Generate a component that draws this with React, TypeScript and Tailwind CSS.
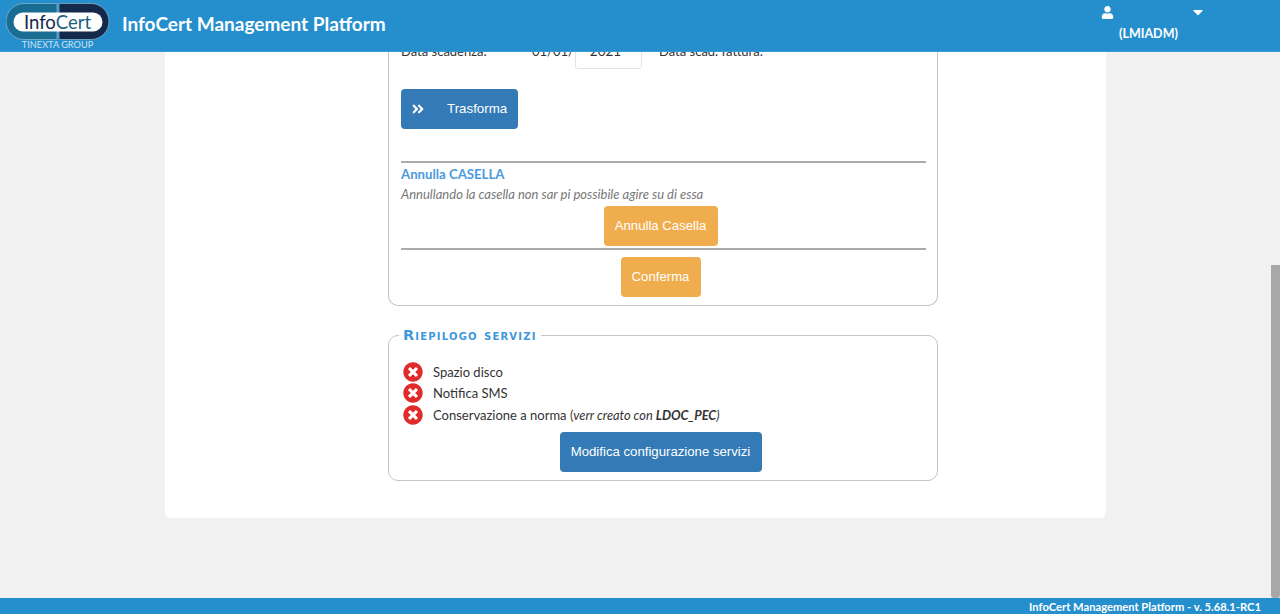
import React from "react";
import { FaAngleDoubleRight, FaUser, FaCaretDown, FaTimesCircle } from "react-icons/fa";

function Logo() {
  return (
    <div className="relative w-[104px] h-[50px] shrink-0">
      <svg width="104" height="37" viewBox="0 0 104 37" className="absolute left-0 top-[3px]">
        <path d="M51 0.500H18A18 18 0 0 0 18 36.500H51Z" fill="#1a6d92" stroke="#8fbcd6" strokeWidth="0.700" />
        <path d="M53 0.500H85A18 18 0 0 1 85 36.500H53Z" fill="#14294b" stroke="#8fbcd6" strokeWidth="0.700" />
        <rect x="7.500" y="9.500" width="89" height="19" rx="9.500" fill="#ffffff" />
      </svg>
      <div className="absolute left-0 top-[8px] w-[103px] text-center font-['Lato','sans-serif'] text-[18.500px] leading-[28px] text-[#14294b]">
        Info<span className="text-[#1d5f80]">Cert</span>
      </div>
      <div className="absolute left-0 top-[39px] w-[103px] text-center font-['Lato','sans-serif'] text-[9.200px] leading-[12px] text-[#cfe3f0]">
        TINEXTA GROUP
      </div>
    </div>
  );
}

function Btn({ children, w, color }: { children: React.ReactNode; w: string; color: "blue" | "orange" }) {
  return (
    <button
      className={`h-10 rounded-[4px] text-white text-[13.200px] font-['Liberation_Sans','sans-serif'] ${w} ${
        color === "blue" ? "bg-[#337ab7]" : "bg-[#f0ad4e]"
      }`}
    >
      {children}
    </button>
  );
}

function ServiceRow({ children }: { children: React.ReactNode }) {
  return (
    <div className="flex items-center h-[21.500px] pl-[2px]">
      <FaTimesCircle className="w-[20px] h-[20px] text-[#e02b2b] shrink-0" />
      <span className="ml-[10px] pt-[1px] text-[13px] text-[#333]">{children}</span>
    </div>
  );
}

export default function App() {
  return (
    <div className="h-[614px] w-full flex flex-col overflow-hidden bg-[#f1f1f1] font-['Lato','sans-serif']">
      <header className="h-[52px] shrink-0 bg-[#258fce] flex items-start relative z-10 border-b border-[#3a9ad4]">
        <div className="ml-[6px]">
          <Logo />
        </div>
        <h1 className="ml-[12px] mt-[9px] text-[19px] leading-[30px] font-bold text-white">InfoCert Management Platform</h1>
        <div className="ml-auto mr-[76px] w-[104px] h-full relative text-white">
          <FaUser className="absolute left-[1px] top-[6px] w-[13px] h-[13px]" />
          <FaCaretDown className="absolute left-[90px] top-[4px] w-[16px] h-[16px]" />
          <div className="absolute left-[19px] top-[25px] text-[12.500px] leading-[18px] font-bold">(LMIADM)</div>
        </div>
      </header>

      <main className="flex-1 min-h-0 flex">
        <div className="flex-1 min-w-0 flex flex-col justify-end overflow-hidden pb-[80px]">
          <div className="ml-[165px] w-[941px] shrink-0 bg-white rounded-b-[6px] pl-[223px] pb-[37px]">
            <section className="w-[550px] border border-[#c4c4c4] rounded-b-[10px] border-t-0 pl-[12px] pr-[11px] pb-[8px] text-[13px] text-[#333]">
              <div className="flex items-end h-[30px]">
                <span className="w-[131px] leading-[20px] mb-[8px]">Data scadenza:</span>
                <span className="w-[43px] leading-[20px] mb-[8px]">01/01/</span>
                <span className="w-[67px] h-[34px] shrink-0 bg-white border border-[#e3e3e3] rounded-[3px] text-center leading-[30px] pr-[6px] text-[13.500px]">2021</span>
                <span className="ml-[17px] leading-[20px] mb-[8px]">Data scad. fattura:</span>
              </div>
              <button className="mt-[20px] w-[117px] h-10 rounded-[4px] bg-[#337ab7] text-white text-[13.333px] font-['Liberation_Sans','sans-serif'] flex items-center pl-[10px]">
                <FaAngleDoubleRight className="w-[14px] h-[14px]" />
                <span className="ml-[22px]">Trasforma</span>
              </button>
              <hr className="mt-[32px] border-0 border-t-2 border-[#ababab]" />
              <h3 className="mt-[1px] text-[13.200px] leading-[20px] font-bold text-[#4a9ade]">Annulla CASELLA</h3>
              <p className="text-[13px] leading-[20px] italic text-[#777]">Annullando la casella non sar pi possibile agire su di essa</p>
              <div className="flex justify-center mr-[6px] mt-[2px]">
                <Btn w="w-[114px]" color="orange">Annulla Casella</Btn>
              </div>
              <hr className="mt-[2px] border-0 border-t-2 border-[#ababab]" />
              <div className="flex justify-center mr-[6px] mt-[7px]">
                <Btn w="w-[80px]" color="orange">Conferma</Btn>
              </div>
            </section>

            <fieldset className="mt-[22px] w-[550px] h-[153px] border border-[#c4c4c4] rounded-[10px] px-[12px] pt-[19px]">
              <legend className="-ml-[2px] px-[4px] font-['DejaVu_Sans','sans-serif'] text-[14.500px] leading-[14px] font-bold text-[#3f97dc] [font-variant:small-caps] tracking-[1.200px]">
                Riepilogo servizi
              </legend>
              <ServiceRow>Spazio disco</ServiceRow>
              <ServiceRow>Notifica SMS</ServiceRow>
              <ServiceRow>
                Conservazione a norma <span className="text-[#5c3a1e]">(</span>
                <i className="text-[12.800px]">verr creato con <b>LDOC_PEC</b>)</i>
              </ServiceRow>
              <div className="flex justify-center mr-[5px] mt-[6px]">
                <Btn w="w-[202px]" color="blue">Modifica configurazione servizi</Btn>
              </div>
            </fieldset>
          </div>
        </div>
        <div className="w-[9px] shrink-0 flex flex-col justify-end">
          <div className="h-[333px] bg-[#a8a8a8] rounded-b-[3px]" />
        </div>
      </main>

      <footer className="h-[16px] shrink-0 bg-[#258fce] text-white text-[11.200px] leading-[18px] font-bold text-right pr-[19px]">
        InfoCert Management Platform - v. 5.68.1-RC1
      </footer>
    </div>
  );
}
